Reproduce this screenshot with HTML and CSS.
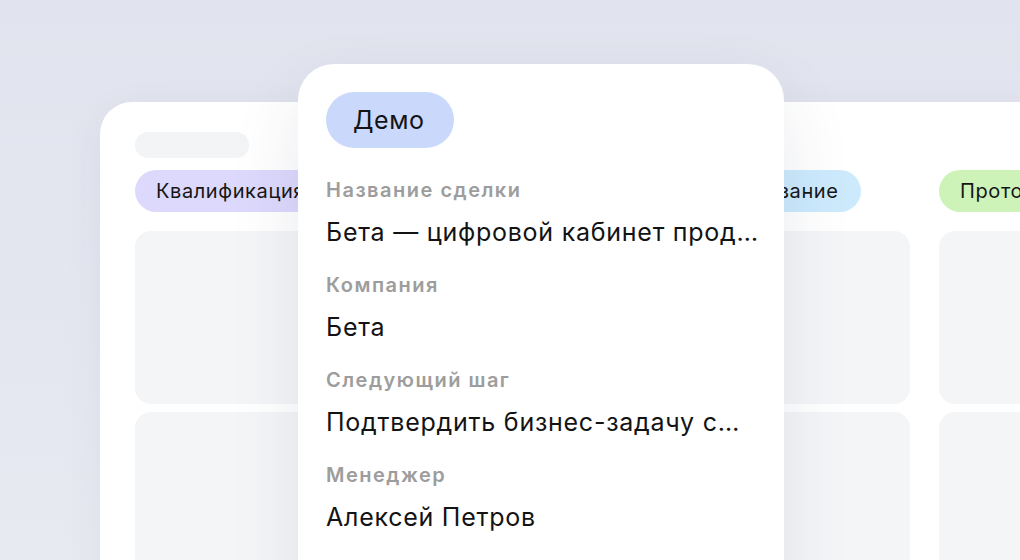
FILE: index.html
```html
<!DOCTYPE html>
<html lang="ru">
<head>
<meta charset="utf-8">
<link rel="stylesheet" href="styles.css">
</head>
<body>
<div class="scene">
  <div class="board">
    <div class="skeleton"></div>
    <div class="columns">
      <div class="column">
        <div class="stage stage-purple">Квалификация</div>
        <div class="slot"></div>
        <div class="slot"></div>
      </div>
      <div class="column">
        <div class="stage stage-blue">Демо</div>
        <div class="slot"></div>
        <div class="slot"></div>
      </div>
      <div class="column">
        <div class="stage stage-sky">Согласование</div>
        <div class="slot"></div>
        <div class="slot"></div>
      </div>
      <div class="column">
        <div class="stage stage-green">Прототип</div>
        <div class="slot"></div>
        <div class="slot"></div>
      </div>
    </div>
  </div>

  <div class="deal">
    <div class="deal-stage">Демо</div>
    <div class="field">
      <div class="field-label">Название сделки</div>
      <div class="field-value">Бета — цифровой кабинет прод…</div>
    </div>
    <div class="field">
      <div class="field-label">Компания</div>
      <div class="field-value">Бета</div>
    </div>
    <div class="field">
      <div class="field-label">Следующий шаг</div>
      <div class="field-value">Подтвердить бизнес-задачу с…</div>
    </div>
    <div class="field">
      <div class="field-label">Менеджер</div>
      <div class="field-value">Алексей Петров</div>
    </div>
  </div>
</div>
</body>
</html>
```

FILE: styles.css
```css
html, body {
  margin: 0;
  padding: 0;
}

body {
  width: 1020px;
  height: 560px;
  overflow: hidden;
  font-family: Inter, "Noto Sans", sans-serif;
  color: #141414;
  background: linear-gradient(180deg, #e1e4ee 0%, #e4e7f0 60%, #e8eaf2 100%);
}

.scene {
  position: relative;
  width: 1020px;
  height: 560px;
  overflow: hidden;
}

.board {
  margin: 102px 0 0 100px;
  width: 1000px;
  height: 520px;
  box-sizing: border-box;
  padding: 30px 0 0 35px;
  background: #ffffff;
  border-radius: 32px;
  box-shadow: 0 10px 40px rgba(60, 70, 110, 0.06);
}

.skeleton {
  width: 114px;
  height: 26px;
  border-radius: 13px;
  background: #f3f4f6;
}

.columns {
  display: grid;
  grid-template-columns: repeat(4, 239px);
  column-gap: 29px;
  margin-top: 12px;
}

.column {
  display: flex;
  flex-direction: column;
  align-items: flex-start;
  gap: 8px;
}

.stage {
  height: 42px;
  line-height: 42px;
  padding: 0 22px 0 21px;
  border-radius: 21px;
  font-size: 20px;
  letter-spacing: 0.6px;
  color: #161616;
  margin-bottom: 11px;
  white-space: nowrap;
}

.stage-purple { background: #ddd9fd; }
.stage-blue { background: #cad9fb; }
.stage-sky { background: #cdeafd; }
.stage-green { background: #cdf3b9; }

.slot {
  align-self: stretch;
  height: 173px;
  border-radius: 16px;
  background: #f4f5f7;
}

.deal {
  position: absolute;
  left: 298px;
  top: 64px;
  width: 486px;
  height: 560px;
  box-sizing: border-box;
  padding: 28px 20px 0 28px;
  background: #ffffff;
  border-radius: 36px;
  box-shadow: 0 30px 70px rgba(40, 50, 90, 0.10);
}

.deal-stage {
  display: inline-block;
  height: 56px;
  line-height: 56px;
  padding: 0 29px 0 27px;
  border-radius: 28px;
  background: #c9d8fb;
  font-size: 25px;
  letter-spacing: 0.6px;
  color: #141414;
  margin-bottom: 30px;
}

.field {
  display: flex;
  flex-direction: column;
  gap: 15px;
  margin-bottom: 26px;
}

.field-label {
  font-size: 20px;
  line-height: 24px;
  font-weight: 600;
  letter-spacing: 1.5px;
  color: #9d9d9d;
}

.field-value {
  font-size: 25px;
  line-height: 30px;
  letter-spacing: 0.75px;
  color: #131313;
  white-space: nowrap;
}
```
